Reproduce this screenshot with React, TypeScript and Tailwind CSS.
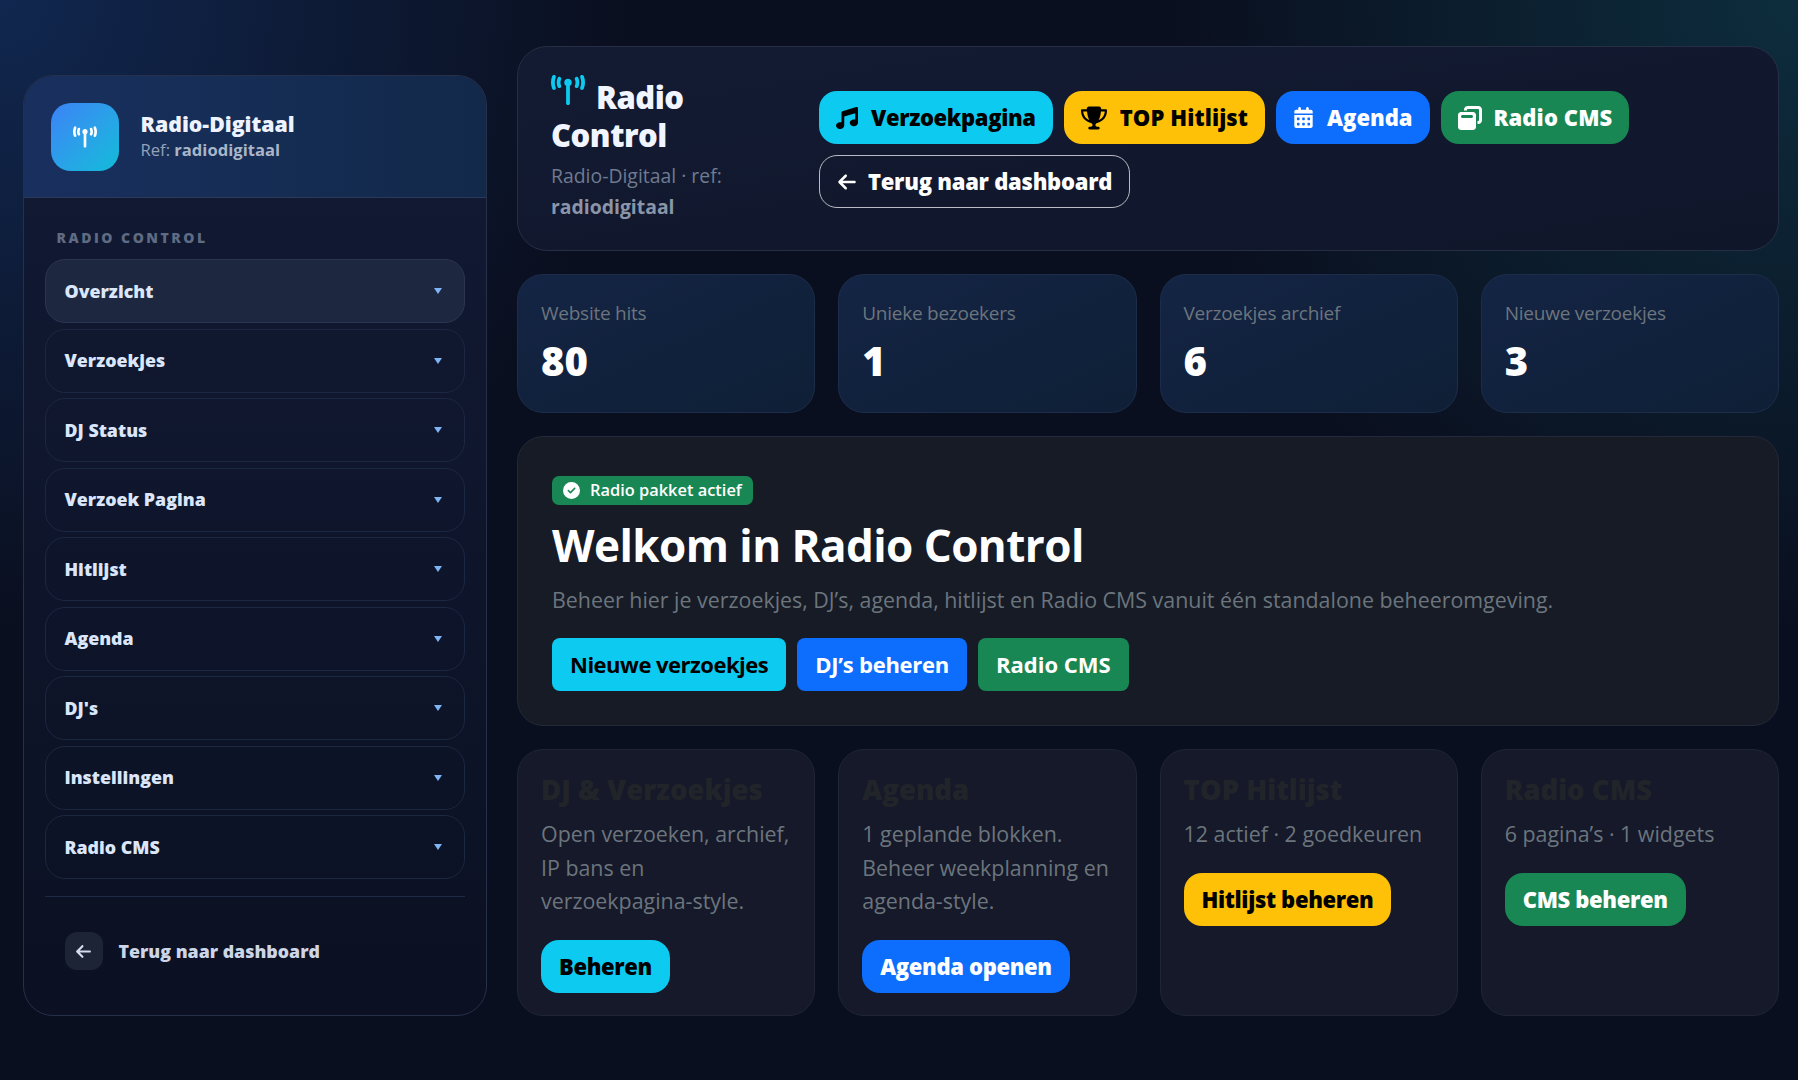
import React from "react";
import { FaTowerBroadcast, FaMusic, FaTrophy, FaCalendarDays, FaWindowRestore, FaArrowLeft, FaCircleCheck } from "react-icons/fa6";

const font = "font-['Open_Sans','Noto_Sans',sans-serif]";

const navItems = ["Overzicht", "Verzoekjes", "DJ Status", "Verzoek Pagina", "Hitlijst", "Agenda", "DJ's", "Instellingen", "Radio CMS"];

function NavItem({ label, active }: { label: string; active?: boolean }) {
  return (
    <div
      className={`flex h-[64px] items-center justify-between rounded-[20px] border px-[19px] ${
        active ? "border-[#2b3550] bg-[#1e2740]" : "border-[#1c2742]"
      }`}
    >
      <span className="text-[17.8px] font-extrabold text-[#dbe6fb]">{label}</span>
      <span className="mr-[3px] h-0 w-0 border-x-[4px] border-t-[6px] border-x-transparent border-t-[#7fb4f5]" />
    </div>
  );
}

function Sidebar() {
  return (
    <aside className="mt-[75px] flex h-[941px] w-[464.5px] shrink-0 flex-col overflow-hidden rounded-[30px] border border-[#26304a] bg-gradient-to-b from-[#121a35] to-[#0b1122]">
      <div className="flex h-[122px] shrink-0 items-center gap-[22px] border-b border-[#2a3a58] bg-gradient-to-r from-[#19305f] to-[#12294a] pl-[27px]">
        <div className="flex h-[68px] w-[68px] items-center justify-center rounded-[20px] bg-gradient-to-br from-[#3b82f6] to-[#0dbcd9] text-[24px] text-white">
          <FaTowerBroadcast />
        </div>
        <div>
          <div className="text-[21.3px] leading-[26px] font-extrabold text-[#eef3ff]">Radio-Digitaal</div>
          <div className="mt-[1px] text-[16.6px] leading-[24px] text-[#94a3b8]">
            Ref: <span className="font-bold text-[#a9b5c8]">radiodigitaal</span>
          </div>
        </div>
      </div>
      <div className="flex flex-1 flex-col px-[21px] pt-[30px]">
        <div className="mb-[11px] pl-[12px] text-[14px] leading-[20px] font-extrabold tracking-[2.5px] text-[#5f6b82]">RADIO CONTROL</div>
        <div className="flex flex-col gap-[5.5px]">
          {navItems.map((l, i) => (
            <NavItem key={l} label={l} active={i === 0} />
          ))}
        </div>
        <div className="mt-[17px] flex items-center gap-[16px] border-t border-[#1f2a44] pt-[35px] pl-[20px]">
          <div className="flex h-[38px] w-[38px] items-center justify-center rounded-[12px] bg-[#1c2435] text-[17px] text-[#d5dded]">
            <FaArrowLeft />
          </div>
          <span className="text-[17.8px] font-extrabold text-[#ccd6e6]">Terug naar dashboard</span>
        </div>
      </div>
    </aside>
  );
}

function TopBtn({ cls, icon, label }: { cls: string; icon: React.ReactNode; label: string }) {
  return (
    <div className={`flex h-[53px] items-center gap-[11px] rounded-[18px] px-[17px] text-[22px] font-extrabold ${cls}`}>
      {icon}
      <span>{label}</span>
    </div>
  );
}

function Stat({ label, value }: { label: string; value: string }) {
  return (
    <div className="h-[139px] rounded-[26px] border border-[#1d2c49] bg-gradient-to-br from-[#142444] to-[#0e1f36] px-[23px] pt-[23px]">
      <div className="text-[19px] leading-[30px] tracking-[-0.25px] text-[#6c757d]">{label}</div>
      <div className="mt-[8px] text-[40px] leading-[50px] font-extrabold text-white">{value}</div>
    </div>
  );
}

function Card({ title, lines, btn, bg, dark }: { title: string; lines: string[]; btn: string; bg: string; dark?: boolean }) {
  return (
    <div className="h-[267px] rounded-[26px] border border-[#202536] bg-[#151929] px-[23px] pt-[23px]">
      <div className="text-[27.5px] leading-[34px] font-extrabold text-[#212529]">{title}</div>
      <div className="mt-[10px] text-[21.4px] leading-[33.7px] text-[#6c757d]">
        {lines.map((l) => (
          <div key={l}>{l}</div>
        ))}
      </div>
      <div className={`mt-[22px] inline-flex h-[53px] items-center rounded-[18px] px-[18px] text-[22px] font-extrabold tracking-[-0.35px] ${bg} ${dark ? "text-black" : "text-white"}`}>{btn}</div>
    </div>
  );
}

function HeroBtn({ cls, label }: { cls: string; label: string }) {
  return <div className={`flex h-[53px] items-center rounded-[8px] px-[18px] text-[22px] font-bold ${cls}`}>{label}</div>;
}

export default function App() {
  return (
    <div
      className={`flex h-[1080px] w-full items-start overflow-hidden bg-[#0a0f1f] bg-[radial-gradient(circle_at_0%_0%,#11274f_0%,transparent_30%),radial-gradient(circle_at_100%_0%,#0d2d3d_0%,transparent_30%)] pr-[19px] pl-[22.5px] ${font}`}
    >
      <Sidebar />
      <main className="mt-[46px] ml-[30px] flex min-w-0 flex-1 flex-col gap-[23px]">
        <section className="flex h-[205px] rounded-[30px] border border-[#262e45] bg-gradient-to-br from-[#131b33] to-[#10162a] pt-[26px] pl-[33px]">
          <div className="w-[268px] shrink-0">
            <div className="text-[31px] leading-[38px] font-extrabold tracking-[-0.5px] text-[#f1f5ff]">
              <FaTowerBroadcast className="mr-[11px] inline align-[2px] text-[34px] text-[#0dcaf0]" />
              Radio
              <br />
              Control
            </div>
            <div className="mt-[6px] text-[19.4px] leading-[31px] text-[#6f7b91]">
              Radio-Digitaal · ref:
              <br />
              <span className="font-bold text-[#8b95a8]">radiodigitaal</span>
            </div>
          </div>
          <div className="flex flex-col gap-[11px] pt-[18px]">
            <div className="flex gap-[11px]">
              <TopBtn cls="bg-[#0dcaf0] text-black tracking-[-0.35px]" icon={<FaMusic className="mr-[2px]" />} label="Verzoekpagina" />
              <TopBtn cls="bg-[#ffc107] text-black tracking-[0.1px]" icon={<FaTrophy className="mr-[2px] text-[26px]" />} label="TOP Hitlijst" />
              <TopBtn cls="bg-[#0d6efd] text-white" icon={<FaCalendarDays className="mr-[2px] text-[21px]" />} label="Agenda" />
              <TopBtn cls="bg-[#198754] text-white tracking-[0.1px]" icon={<FaWindowRestore className="mr-[1px] text-[24px]" />} label="Radio CMS" />
            </div>
            <div className="flex h-[53px] items-center gap-[11px] self-start rounded-[18px] border border-[#b9bcc4] px-[17px] text-[22px] font-extrabold tracking-[-0.25px] text-white">
              <FaArrowLeft className="text-[20px]" />
              <span>Terug naar dashboard</span>
            </div>
          </div>
        </section>

        <section className="grid grid-cols-4 gap-[23px]">
          <Stat label="Website hits" value="80" />
          <Stat label="Unieke bezoekers" value="1" />
          <Stat label="Verzoekjes archief" value="6" />
          <Stat label="Nieuwe verzoekjes" value="3" />
        </section>

        <section className="h-[290px] rounded-[26px] border border-[#232938] bg-[#161b26] px-[34px] pt-[39px]">
          <div className="inline-flex h-[29px] items-center gap-[10px] rounded-[7px] bg-[#198754] px-[11px] text-[16.4px] font-semibold text-white">
            <FaCircleCheck className="text-[17px]" />
            Radio pakket actief
          </div>
          <h1 className="mt-[9px] text-[44px] leading-[62px] font-bold tracking-[-0.55px] text-white">Welkom in Radio Control</h1>
          <p className="mt-[7px] text-[21.4px] leading-[33px] text-[#6c757d]">
            Beheer hier je verzoekjes, DJ’s, agenda, hitlijst en Radio CMS vanuit één standalone beheeromgeving.
          </p>
          <div className="mt-[22px] flex gap-[11px]">
            <HeroBtn cls="bg-[#0dcaf0] text-black tracking-[-0.5px]" label="Nieuwe verzoekjes" />
            <HeroBtn cls="bg-[#0d6efd] text-white tracking-[-0.25px]" label="DJ’s beheren" />
            <HeroBtn cls="bg-[#198754] text-white" label="Radio CMS" />
          </div>
        </section>

        <section className="grid grid-cols-4 gap-[23px]">
          <Card title="DJ & Verzoekjes" lines={["Open verzoeken, archief,", "IP bans en", "verzoekpagina-style."]} btn="Beheren" bg="bg-[#0dcaf0]" dark />
          <Card title="Agenda" lines={["1 geplande blokken.", "Beheer weekplanning en", "agenda-style."]} btn="Agenda openen" bg="bg-[#0d6efd]" />
          <Card title="TOP Hitlijst" lines={["12 actief · 2 goedkeuren"]} btn="Hitlijst beheren" bg="bg-[#ffc107]" dark />
          <Card title="Radio CMS" lines={["6 pagina’s · 1 widgets"]} btn="CMS beheren" bg="bg-[#198754]" />
        </section>
      </main>
    </div>
  );
}
